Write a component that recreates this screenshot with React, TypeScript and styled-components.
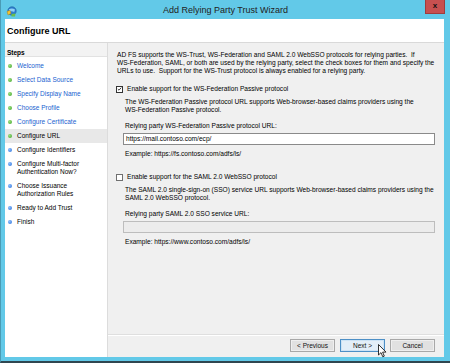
import React from 'react';
import styled, { createGlobalStyle } from 'styled-components';

const GlobalStyle = createGlobalStyle`
	html, body {
		margin: 0;
		padding: 0;
		background: #ffffff;
	}
	body {
		font-family: 'Liberation Sans', Arial, sans-serif;
	}
`;

interface Step {
	label: string[];
	state: 'done' | 'current' | 'todo';
}

const steps: Step[] = [
	{ label: ['Welcome'], state: 'done' },
	{ label: ['Select Data Source'], state: 'done' },
	{ label: ['Specify Display Name'], state: 'done' },
	{ label: ['Choose Profile'], state: 'done' },
	{ label: ['Configure Certificate'], state: 'done' },
	{ label: ['Configure URL'], state: 'current' },
	{ label: ['Configure Identifiers'], state: 'todo' },
	{ label: ['Configure Multi-factor', 'Authentication Now?'], state: 'todo' },
	{ label: ['Choose Issuance', 'Authorization Rules'], state: 'todo' },
	{ label: ['Ready to Add Trust'], state: 'todo' },
	{ label: ['Finish'], state: 'todo' },
];

function AppIcon() {
	return (
		<svg width='11' height='11' viewBox='0 0 11 11'>
			<circle cx='6' cy='5' r='4.2' fill='#2f7fd0' stroke='#1c5a9a' strokeWidth='0.6' />
			<path d='M3 3.2 Q6 1.5 9 3.5 L8.2 6 Q5.5 4.5 3.4 6 Z' fill='#8fd0f5' />
			<path d='M1 5.5 L4 4.3 L5 7.5 L2 9 Z' fill='#f2c232' stroke='#a07810' strokeWidth='0.4' />
			<path d='M5.5 8 L9.5 7.5 L9 10.5 L5.5 10.5 Z' fill='#6bbf4a' />
		</svg>
	);
}

function CheckMark() {
	return (
		<svg width='7' height='7' viewBox='0 0 7 7'>
			<path d='M1.2 3.6 L2.8 5.2 L5.9 1.6' fill='none' stroke='#1a1a1a' strokeWidth='1.2' />
		</svg>
	);
}

function Cursor() {
	return (
		<svg width='9' height='14' viewBox='0 0 9 14'>
			<path
				d='M0.5 0.5 L0.5 11 L3 8.6 L4.8 12.8 L6.3 12.1 L4.6 8.1 L8 8.1 Z'
				fill='#ffffff'
				stroke='#000000'
				strokeWidth='0.8'
				strokeLinejoin='round'
			/>
		</svg>
	);
}

export default function App() {
	return (
		<>
			<GlobalStyle />
			<Window>
				<TitleBar>
					<TitleIcon>
						<AppIcon />
					</TitleIcon>
					<TitleText>Add Relying Party Trust Wizard</TitleText>
					<CloseButton>x</CloseButton>
				</TitleBar>
				<Inner>
					<Header>Configure URL</Header>
					<Body>
						<Sidebar>
							<StepsHeader>Steps</StepsHeader>
							<StepList>
								{steps.map((step) => (
									<StepItem key={step.label[0]} $current={step.state === 'current'}>
										<Bullet $done={step.state !== 'todo'} />
										<StepLabel $link={step.state === 'done'}>
											{step.label.map((line) => (
												<div key={line}>{line}</div>
											))}
										</StepLabel>
									</StepItem>
								))}
							</StepList>
						</Sidebar>
						<Content>
							<Main>
								<Intro>
									AD FS supports the WS-Trust, WS-Federation and SAML 2.0 WebSSO protocols for relying parties.&nbsp; If
									<br />
									WS-Federation, SAML, or both are used by the relying party, select the check boxes for them and specify the
									<br />
									URLs to use.&nbsp; Support for the WS-Trust protocol is always enabled for a relying party.
								</Intro>

								<CheckRow $gap={10}>
									<CheckBox $checked>
										<CheckMark />
									</CheckBox>
									Enable support for the WS-Federation Passive protocol
								</CheckRow>
								<Description>
									The WS-Federation Passive protocol URL supports Web-browser-based claims providers using the
									<br />
									WS-Federation Passive protocol.
								</Description>
								<FieldLabel>Relying party WS-Federation Passive protocol URL:</FieldLabel>
								<TextBox>https://mail.contoso.com/ecp/</TextBox>
								<Example>Example: https://fs.contoso.com/adfs/ls/</Example>

								<CheckRow $gap={15}>
									<CheckBox />
									Enable support for the SAML 2.0 WebSSO protocol
								</CheckRow>
								<Description>
									The SAML 2.0 single-sign-on (SSO) service URL supports Web-browser-based claims providers using the
									<br />
									SAML 2.0 WebSSO protocol.
								</Description>
								<FieldLabel>Relying party SAML 2.0 SSO service URL:</FieldLabel>
								<TextBox $disabled />
								<Example>Example: https://www.contoso.com/adfs/ls/</Example>
							</Main>
							<Footer>
								<Button>&lt; Previous</Button>
								<Button $primary>Next &gt;</Button>
								<Button>Cancel</Button>
							</Footer>
						</Content>
					</Body>
				</Inner>
				<PointerOverlay>
					<Cursor />
				</PointerOverlay>
			</Window>
		</>
	);
}

const Window = styled.div`
	position: relative;
	box-sizing: border-box;
	width: 450px;
	height: 363px;
	display: flex;
	flex-direction: column;
	background: #62c9e8;
	border-left: 1px solid #4a9bb5;
	border-bottom: 2px solid #2f4650;
	padding: 0 6px 4px 4px;
	overflow: hidden;
`;

const TitleBar = styled.div`
	position: relative;
	height: 19px;
	flex: none;
	display: flex;
	align-items: center;
	justify-content: center;
`;

const TitleIcon = styled.div`
	position: absolute;
	left: 1px;
	top: 3px;
	width: 11px;
	height: 11px;
`;

const TitleText = styled.div`
	font-size: 9px;
	color: #222222;
	margin-top: 1px;
	margin-left: 2px;
`;

const CloseButton = styled.div`
	position: absolute;
	right: -1px;
	top: 0;
	width: 20px;
	height: 14px;
	box-sizing: border-box;
	background: #c75050;
	border: 1px solid #a03c3c;
	border-top: none;
	color: #111111;
	font-size: 8px;
	font-weight: bold;
	line-height: 12px;
	text-align: center;
`;

const Inner = styled.div`
	flex: 1;
	display: flex;
	flex-direction: column;
	background: #f0f0f0;
	min-height: 0;
`;

const Header = styled.div`
	box-sizing: border-box;
	height: 24px;
	flex: none;
	background: #ffffff;
	border-bottom: 1px solid #d9d9d9;
	padding: 0 2px;
	font-size: 9px;
	font-weight: bold;
	color: #000000;
	display: flex;
	align-items: center;
`;

const Body = styled.div`
	flex: 1;
	display: flex;
	min-height: 0;
`;

const Sidebar = styled.div`
	box-sizing: border-box;
	width: 103px;
	flex: none;
	background: #ffffff;
	border-right: 1px solid #dcdcdc;
	display: flex;
	flex-direction: column;
`;

const StepsHeader = styled.div`
	box-sizing: border-box;
	height: 14px;
	padding: 5px 2px 0;
	line-height: 9px;
	font-size: 6.5px;
	font-weight: bold;
	color: #000000;
	background: #f3f3f3;
	border-bottom: 1px solid #e2e2e2;
`;

const StepList = styled.div`
	padding-top: 2px;
	display: flex;
	flex-direction: column;
`;

const StepItem = styled.div<{ $current?: boolean }>`
	display: flex;
	align-items: flex-start;
	gap: 5px;
	padding: 3px 0 3px 3px;
	background: ${(p) => (p.$current ? '#e8e8e8' : 'transparent')};
`;

const Bullet = styled.span<{ $done?: boolean }>`
	width: 4px;
	height: 4px;
	margin-top: 2px;
	flex: none;
	border-radius: 50%;
	background: ${(p) =>
		p.$done
			? 'radial-gradient(circle at 35% 35%, #9be07e, #3fa32a)'
			: 'radial-gradient(circle at 35% 35%, #8fc0ff, #2a6fd8)'};
`;

const StepLabel = styled.div<{ $link?: boolean }>`
	font-size: 6.5px;
	line-height: 8px;
	color: ${(p) => (p.$link ? '#1a5fd0' : '#000000')};
	white-space: nowrap;
`;

const Content = styled.div`
	flex: 1;
	display: flex;
	flex-direction: column;
	min-width: 0;
`;

const Main = styled.div`
	flex: 1;
	padding: 8px 9px 0 8px;
	font-size: 6.6px;
	line-height: 8px;
	color: #000000;
	white-space: nowrap;
`;

const Intro = styled.div`
	margin-left: 1px;
`;

const CheckRow = styled.div<{ $gap: number }>`
	margin-top: ${(p) => p.$gap}px;
	display: flex;
	align-items: center;
	gap: 4px;
	height: 8px;
`;

const CheckBox = styled.span<{ $checked?: boolean }>`
	box-sizing: border-box;
	width: 7px;
	height: 7px;
	flex: none;
	background: #ffffff;
	border: 1px solid ${(p) => (p.$checked ? '#333333' : '#707070')};
	display: flex;
	align-items: center;
	justify-content: center;

	svg {
		width: 6px;
		height: 6px;
	}
`;

const Description = styled.div`
	margin-top: 5px;
	margin-left: 9px;
`;

const FieldLabel = styled.div`
	margin-top: 8px;
	margin-left: 9px;
`;

const TextBox = styled.div<{ $disabled?: boolean }>`
	box-sizing: border-box;
	margin-top: 3px;
	margin-left: 7px;
	height: 12px;
	padding: 0 2px;
	line-height: 10px;
	background: ${(p) => (p.$disabled ? '#ececec' : '#ffffff')};
	border: 1px solid ${(p) => (p.$disabled ? '#bdbdbd' : '#8a8a8a')};
`;

const Example = styled.div`
	margin-top: 5px;
	margin-left: 9px;
`;

const Footer = styled.div`
	box-sizing: border-box;
	height: 23px;
	flex: none;
	border-top: 1px solid #dfdfdf;
	box-shadow: inset 0 1px 0 #ffffff;
	display: flex;
	align-items: center;
	justify-content: flex-end;
	gap: 5px;
	padding: 0 9px 1px 0;
`;

const Button = styled.div<{ $primary?: boolean }>`
	box-sizing: border-box;
	width: 45px;
	height: 13px;
	display: flex;
	align-items: center;
	justify-content: center;
	font-size: 6.5px;
	color: #111111;
	background: ${(p) => (p.$primary ? '#e3eef8' : '#e1e1e1')};
	border: 1px solid ${(p) => (p.$primary ? '#4d8fc6' : '#a8a8a8')};
	box-shadow: inset 0 0 0 1px ${(p) => (p.$primary ? '#cde3f5' : '#efefef')};
`;

const PointerOverlay = styled.div`
	position: absolute;
	left: 377px;
	top: 344px;
	width: 9px;
	height: 14px;
	pointer-events: none;
`;
